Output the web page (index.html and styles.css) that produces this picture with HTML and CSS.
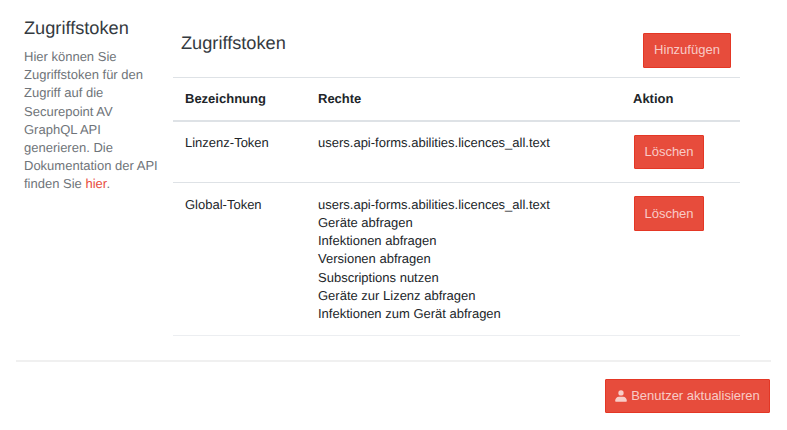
FILE: index.html
```html
<!DOCTYPE html>
<html lang="de">
<head>
<meta charset="utf-8">
<title>Zugriffstoken</title>
<link rel="stylesheet" href="styles.css">
</head>
<body>
<main class="page">
  <div class="columns">
    <aside class="intro">
      <h2 class="intro-title">Zugriffstoken</h2>
      <p class="intro-text">Hier können Sie Zugriffstoken für den Zugriff auf die Securepoint AV GraphQL API generieren. Die Dokumentation der API finden Sie <a class="link" href="#">hier</a>.</p>
    </aside>
    <section class="content">
      <header class="content-head">
        <h3 class="content-title">Zugriffstoken</h3>
        <button class="btn btn-add" type="button">Hinzufügen</button>
      </header>
      <table class="tokens">
        <colgroup>
          <col class="col-name"><col class="col-rights"><col class="col-action">
        </colgroup>
        <thead>
          <tr><th>Bezeichnung</th><th>Rechte</th><th>Aktion</th></tr>
        </thead>
        <tbody>
          <tr>
            <td>Linzenz-Token</td>
            <td>users.api-forms.abilities.licences_all.text</td>
            <td><button class="btn btn-row" type="button">Löschen</button></td>
          </tr>
          <tr>
            <td>Global-Token</td>
            <td>users.api-forms.abilities.licences_all.text<br>Geräte abfragen<br>Infektionen abfragen<br>Versionen abfragen<br>Subscriptions nutzen<br>Geräte zur Lizenz abfragen<br>Infektionen zum Gerät abfragen</td>
            <td><button class="btn btn-row" type="button">Löschen</button></td>
          </tr>
        </tbody>
      </table>
    </section>
  </div>
  <hr class="divider">
  <footer class="actions">
    <button class="btn btn-save" type="button">
      <svg class="icon" viewBox="0 0 14 14" aria-hidden="true"><circle cx="7" cy="3.4" r="3.1"/><path d="M1 13.6c-.5 0-.8-.3-.8-.8C.2 9.700 2.200 7.800 4.500 7.800h5c2.300 0 4.300 1.900 4.300 5 0 .5-.3.8-.8.8z"/></svg>
      <span>Benutzer aktualisieren</span>
    </button>
  </footer>
</main>
</body>
</html>
```

FILE: styles.css
```css
* {
  box-sizing: border-box;
}

html,
body {
  margin: 0;
  height: 100%;
  background: #fff;
}

body {
  font-family: "Liberation Sans", Arial, sans-serif;
  font-size: 13px;
  line-height: 18.2px;
  color: #212529;
  text-rendering: geometricPrecision;
  overflow: hidden;
}

.page {
  padding: 16px 16px 0;
  width: 787px;
}

.columns {
  display: flex;
}

.intro {
  width: 157px;
  flex: none;
  padding-left: 8px;
}

.intro-title {
  margin: 0;
  padding-top: 1px;
  font-size: 18.2px;
  font-weight: 400;
  line-height: 22px;
  color: #343a40;
}

.intro-text {
  margin: 8.9px 0 0;
  width: 140px;
  color: #6f7479;
}

.link {
  color: #e74c3c;
  text-decoration: none;
}

.content {
  width: 567px;
  flex: none;
}

.content-head {
  display: flex;
  justify-content: space-between;
  align-items: flex-start;
  height: 61px;
  padding: 17px 9px 0 8px;
}

.content-title {
  margin: -1px 0 0;
  font-size: 18.2px;
  font-weight: 400;
  line-height: 22px;
  color: #343a40;
}

.btn {
  font-family: inherit;
  font-size: 13px;
  line-height: 18.2px;
  color: rgba(255, 255, 255, 0.72);
  background: #e74c3c;
  border: 1px solid #e43725;
  border-radius: 1px;
  padding: 7px 10px;
  cursor: pointer;
}

.btn-add {
  width: 88px;
  height: 35px;
  padding: 0;
}

.tokens {
  width: 567px;
  border-collapse: collapse;
  table-layout: fixed;
}

.col-name {
  width: 133px;
}

.col-rights {
  width: 315px;
}

.col-action {
  width: 119px;
}

.tokens th,
.tokens td {
  padding: 12px;
  text-align: left;
  vertical-align: top;
  border-top: 1px solid #dee2e6;
}

.tokens th {
  font-weight: 700;
  border-bottom: 2px solid #dee2e6;
}

.tokens tbody tr:last-child td {
  padding-top: 12.5px;
  padding-bottom: 11.5px;
  border-bottom: 1px solid #eceef1;
}

.btn-row {
  display: block;
  width: 70px;
  height: 34px;
  margin: 1px 0 1px 1px;
  padding: 0;
}

.tokens tbody tr:last-child .btn-row {
  height: 35px;
  margin-top: 0.5px;
}

.divider {
  margin: 24px 0 17px;
  width: 755px;
  height: 2px;
  border: 0;
  background: #f0f0f0;
}

.actions {
  display: flex;
  justify-content: flex-end;
  padding-right: 1px;
}

.btn-save {
  display: flex;
  align-items: center;
  justify-content: center;
  gap: 4px;
  width: 165px;
  height: 34px;
  padding: 0;
}

.icon {
  width: 12px;
  height: 14px;
  fill: rgba(255, 255, 255, 0.72);
}
```
